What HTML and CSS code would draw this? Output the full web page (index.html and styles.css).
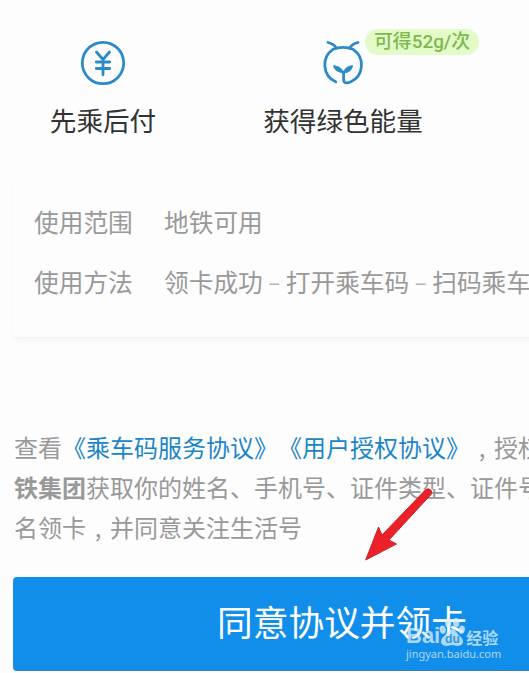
FILE: index.html
```html
<!DOCTYPE html>
<html lang="zh-CN">
<head>
    <meta charset="UTF-8">
    <meta name="viewport" content="width=device-width, initial-scale=1.0">
    <title>乘车码领卡</title>
    <link rel="stylesheet" href="styles.css">
</head>
<body>
    <main class="page">
        <section class="features">
            <div class="feature">
                <svg class="feature-icon" viewBox="0 0 50 50" fill="none" stroke="#2b8bc8" stroke-width="2.8" stroke-linecap="round">
                    <circle cx="25" cy="25" r="20.7"/>
                    <path d="M18.500 14l6.500 7.500 6.500-7.500M25 22v14.800M18.300 24h13.400M18.300 30.500h13.400" stroke-width="2.8"/>
                </svg>
                <span>先乘后付</span>
            </div>
            <div class="feature">
                <svg class="feature-icon" viewBox="0 0 50 50" fill="none" stroke="#2b8bc8" stroke-width="2.8" stroke-linecap="round">
                    <path d="M17.700 43.800A18.700 18.700 0 0 1 15 11.300Q25 7.500 35 11.300A18.700 18.700 0 0 1 32.500 44C28.500 45.800 25.600 45 25.600 41.500V34"/>
                    <path d="M10 4.500q6 1.500 8.300 5.500M40 4.500q-6 1.500-8.300 5.500"/>
                    <path d="M25.200 35c-.8-4-3-6.300-9.600-7.300 1.200 5 4.400 6 9.600 7.300zM25.800 35c.6-4.300 3-6.600 8.700-7.300-.8 4.800-3.600 6.500-8.700 7.300z" fill="#2b8bc8" stroke-width="1"/>
                </svg>
                <span>获得绿色能量</span>
                <b class="badge">可得52g/次</b>
            </div>
        </section>

        <dl class="card">
            <dt>使用范围</dt>
            <dd>地铁可用</dd>
            <dt>使用方法</dt>
            <dd>领卡成功<i class="dash">–</i>打开乘车码<i class="dash">–</i>扫码乘车</dd>
        </dl>

        <p class="agreement">
            查看<a>《乘车码服务协议》《用户授权协议》</a><span class="comma">,</span>授权<br>
            <strong>铁集团</strong>获取你的姓名、手机号、证件类型、证件号<br>
            名领卡<span class="comma">,</span>并同意关注生活号
        </p>

        <button class="submit" type="button">同意协议并领卡</button>
    </main>

    <svg class="arrow" viewBox="0 0 70 74">
        <path d="M61.500 2.800Q64.500 .5 66.800 3Q68.500 5 67 7.500L25 53L32.500 57L1.700 73L14.500 40L18 48z" fill="#ec2028" stroke="#c2272d" stroke-width="1"/>
    </svg>

    <div class="watermark">
        <div class="brand">
            <span>Bai</span>
            <svg class="paw" viewBox="0 0 28 32" fill="currentColor">
                <ellipse cx="4" cy="13.5" rx="3.3" ry="4.5" transform="rotate(-15 4 13.5)"/>
                <ellipse cx="10" cy="6" rx="3.4" ry="5"/>
                <ellipse cx="18.5" cy="6" rx="3.4" ry="5"/>
                <ellipse cx="24.5" cy="13.5" rx="3.3" ry="4.5" transform="rotate(15 24.5 13.5)"/>
                <path d="M14 13c4 0 5.500 5 9.500 8.500C28 26 25.500 31 20.500 31c-3 0-4-1-6.500-1s-3.500 1-6.500 1C2.500 31 0 26 4.500 21.500 8.500 18 10 13 14 13z"/>
                <text x="6.500" y="28" class="du">du</text>
            </svg>
            <span class="brand-cn">经验</span>
        </div>
        <div class="site">jingyan.baidu.com</div>
    </div>
</body>
</html>
```

FILE: styles.css
```css
body {
    margin: 0;
    height: 673px;
    overflow: hidden;
    position: relative;
    background-color: #fefdfe;
    font-family: "Noto Sans CJK SC", sans-serif;
    color: #333;
    text-spacing-trim: space-all;
}

.page {
    width: 686px;
}

/* Vorteile */
.features {
    display: grid;
    grid-template-columns: 206px 274px 206px;
    height: 180px;
}

.feature {
    position: relative;
    display: flex;
    flex-direction: column;
    align-items: center;
    padding-top: 38px;
    font-size: 26.6px;
    line-height: 38px;
    white-space: nowrap;
}

.feature-icon {
    width: 50px;
    height: 50px;
    margin-bottom: 13px;
}

.badge {
    position: absolute;
    top: 29px;
    left: 159px;
    width: 114px;
    height: 26px;
    border-radius: 13px;
    background-color: #e2fbc9;
    color: #7fb84c;
    font-family: Roboto, "Noto Sans CJK SC", sans-serif;
    font-size: 18.9px;
    font-weight: 500;
    line-height: 25px;
    text-align: center;
}

/* Karte mit Nutzungshinweisen */
.card {
    display: grid;
    grid-template-columns: 130px 1fr;
    grid-auto-rows: 60px;
    box-sizing: border-box;
    width: 658px;
    height: 157px;
    margin: 0 0 0 13px;
    padding: 11px 0 0 21px;
    border-radius: 6px;
    background-color: #fefdfe;
    box-shadow: 0 3px 4px rgba(90, 70, 130, 0.06);
    color: #999;
    font-size: 24.7px;
    line-height: 60px;
    white-space: nowrap;
}

.card dd {
    margin: 0;
}

.dash {
    display: inline-block;
    width: 23px;
    color: #b5b5b5;
    font-family: Roboto, sans-serif;
    font-size: 20px;
    font-style: normal;
    text-align: center;
}

/* Vereinbarung */
.agreement {
    margin: 90px 0 0 14px;
    color: #999;
    font-size: 24px;
    line-height: 40px;
    white-space: nowrap;
}

.agreement a {
    color: #1b86c6;
}

.comma {
    display: inline-block;
    width: 24px;
    text-align: center;
}

.submit {
    display: block;
    box-sizing: border-box;
    width: 658px;
    height: 94px;
    margin: 30px 0 0 13px;
    padding: 0 0 6px;
    border: 0;
    border-bottom: 1px solid #3b7fb8;
    border-radius: 4px;
    background-color: #118eea;
    color: #fff;
    font-family: inherit;
    font-size: 35.7px;
    line-height: 86px;
}

/* Pfeil auf den Button */
.arrow {
    position: absolute;
    top: 487px;
    left: 364px;
    width: 70px;
    height: 74px;
}

/* Wasserzeichen */
.watermark {
    position: absolute;
    top: 616px;
    left: 406px;
    color: rgba(215, 236, 252, 0.8);
    font-family: "Liberation Sans", sans-serif;
}

.brand {
    display: flex;
    align-items: flex-end;
    height: 31px;
    font-size: 22px;
    font-weight: bold;
    line-height: 22px;
}

.paw {
    width: 26px;
    height: 30px;
    margin: 0 1px 0 -1px;
}

.du {
    fill: #2e96e5;
    font-size: 13px;
    font-weight: bold;
}

.brand-cn {
    font-family: "Noto Sans CJK SC", sans-serif;
    font-size: 16px;
    font-weight: bold;
    line-height: 19px;
}

.site {
    font-family: "Noto Sans", sans-serif;
    font-size: 11px;
    line-height: 14px;
}
```
